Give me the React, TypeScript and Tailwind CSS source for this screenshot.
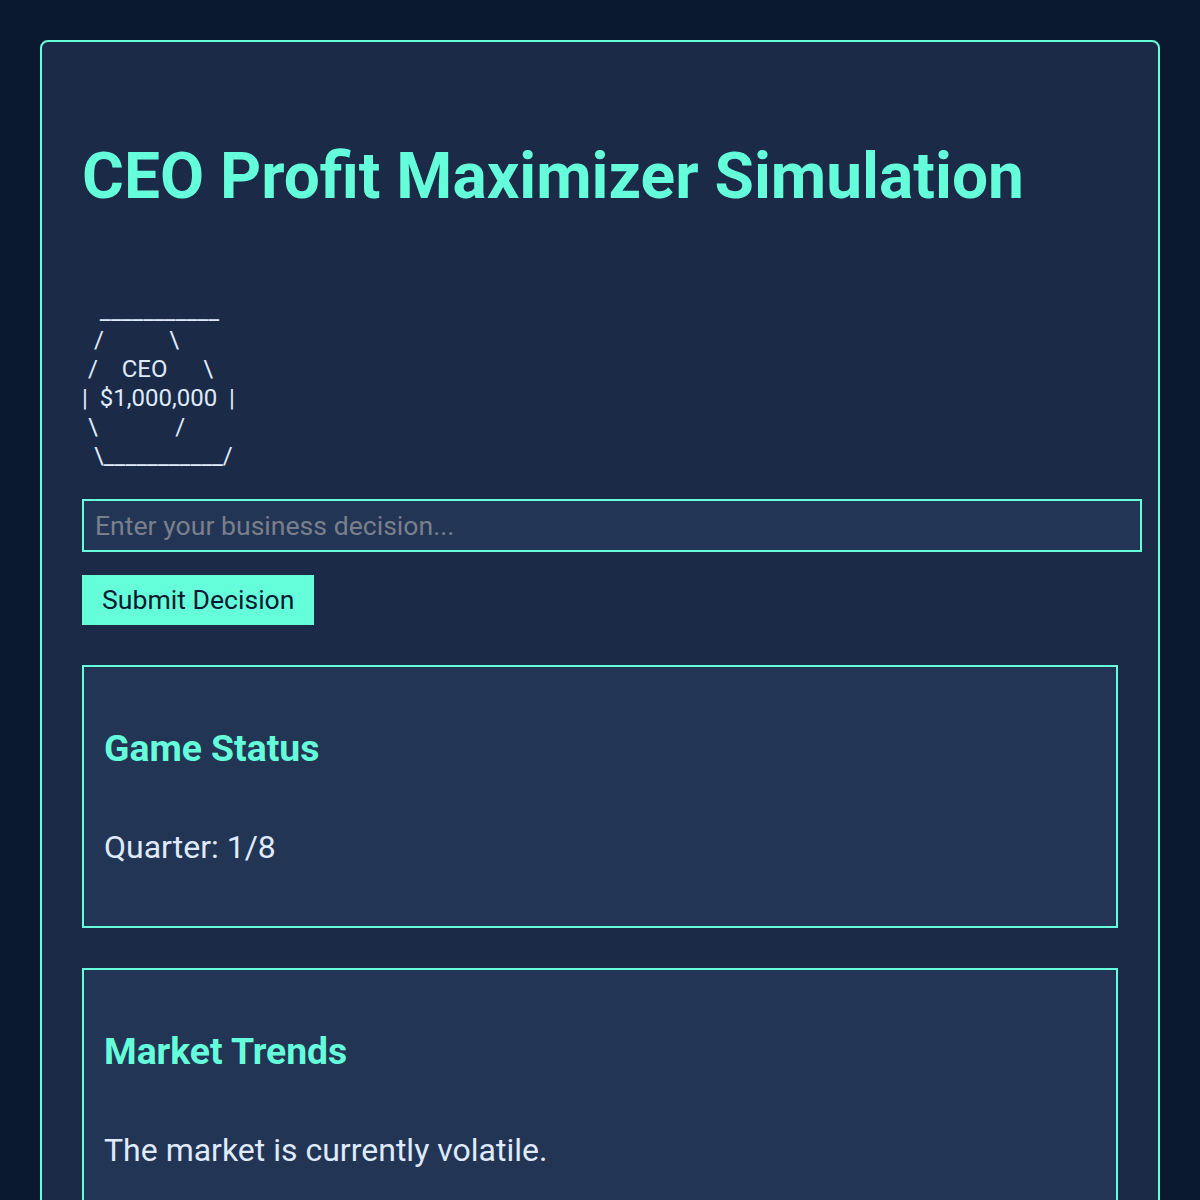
import React, { useState } from "react";

const ART = [
  "   ___________",
  "  /           \\",
  " /    CEO      \\",
  "|  $1,000,000  |",
  " \\             /",
  "  \\___________/",
];

function Panel({ title, children }: { title: string; children: React.ReactNode }) {
  return (
    <div className="border-2 border-[#64ffda] bg-[#233555] px-5 pt-[60px] pb-[60px]">
      <h2 className="text-[37.3px] font-bold leading-[1.17] text-[#64ffda]">{title}</h2>
      <p className="mt-[58px] text-[32px] leading-[1.17] text-[#dfeafc]">{children}</p>
    </div>
  );
}

export default function App() {
  const [decision, setDecision] = useState("");

  return (
    <div className="min-h-screen bg-[#0a192f] p-10 font-['Roboto',sans-serif]">
      <div className="rounded-lg border-2 border-[#64ffda] bg-[#1a2a47] px-10 pt-[98px] pb-10">
        <h1 className="text-[64px] font-bold leading-[1.17] text-[#64ffda]">CEO Profit Maximizer Simulation</h1>

        <pre className="mt-[82px] whitespace-pre font-['Roboto',sans-serif] text-[24px] leading-[29px] text-[#dfeafc]">
          {ART.join("\n")}
        </pre>

        <input
          value={decision}
          onChange={(e) => setDecision(e.target.value)}
          placeholder="Enter your business decision..."
          className="mt-[28px] block h-[53px] w-[calc(100%+24px)] border-2 border-[#64ffda] bg-[#233555] px-[11px] text-[26.6px] text-[#dfeafc] placeholder:text-[#7a7f8c] outline-none"
        />

        <button className="mt-[23px] block h-[50px] bg-[#64ffda] px-5 text-[26.6px] text-[#0a192f]">
          Submit Decision
        </button>

        <div className="mt-10 flex flex-col gap-10">
          <Panel title="Game Status">Quarter: 1/8</Panel>
          <Panel title="Market Trends">The market is currently volatile.</Panel>
        </div>
      </div>
    </div>
  );
}
